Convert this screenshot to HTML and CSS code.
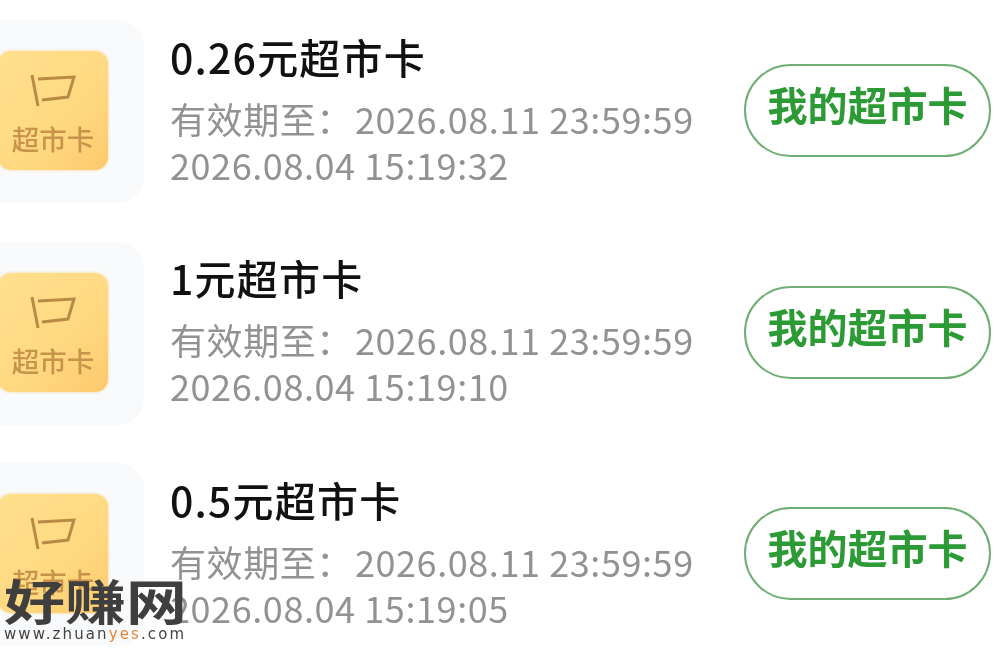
FILE: index.html
```html
<!DOCTYPE html>
<html lang="zh">
<head>
<meta charset="utf-8">
<title>超市卡</title>
<link rel="stylesheet" href="styles.css">
</head>
<body>
<main class="list">
  <section class="row">
    <div class="tile"><div class="card">
      <svg class="glyph" viewBox="0 0 46 36"><path d="M2 2 L8 33 M8 6 L44 4 L38 24 L12 27"/></svg>
      <span class="card-label">超市卡</span>
    </div></div>
    <div class="info">
      <h2 class="title">0.26元超市卡</h2>
      <p class="meta">有效期至：<span class="date">2026.08.11 23:59:59</span></p>
      <p class="meta">2026.08.04 15:19:32</p>
    </div>
    <button class="action">我的超市卡</button>
  </section>
  <section class="row">
    <div class="tile"><div class="card">
      <svg class="glyph" viewBox="0 0 46 36"><path d="M2 2 L8 33 M8 6 L44 4 L38 24 L12 27"/></svg>
      <span class="card-label">超市卡</span>
    </div></div>
    <div class="info">
      <h2 class="title">1元超市卡</h2>
      <p class="meta">有效期至：<span class="date">2026.08.11 23:59:59</span></p>
      <p class="meta">2026.08.04 15:19:10</p>
    </div>
    <button class="action">我的超市卡</button>
  </section>
  <section class="row">
    <div class="tile"><div class="card">
      <svg class="glyph" viewBox="0 0 46 36"><path d="M2 2 L8 33 M8 6 L44 4 L38 24 L12 27"/></svg>
      <span class="card-label">超市卡</span>
    </div></div>
    <div class="info">
      <h2 class="title">0.5元超市卡</h2>
      <p class="meta">有效期至：<span class="date">2026.08.11 23:59:59</span></p>
      <p class="meta">2026.08.04 15:19:05</p>
    </div>
    <button class="action">我的超市卡</button>
  </section>
</main>
<div class="mark">
  <div class="mark-name">好赚网</div>
  <div class="mark-url">www.zhuan<span class="mark-yes">yes</span>.com</div>
</div>
</body>
</html>
```
FILE: styles.css
```css
* { box-sizing: border-box; }
html, body { margin: 0; padding: 0; }
body {
  width: 1000px;
  height: 658px;
  overflow: hidden;
  position: relative;
  background: #fff;
  font-family: "Noto Sans CJK SC", "Noto Sans", sans-serif;
}
.list {
  display: flex;
  flex-direction: column;
  gap: 38px;
  padding-top: 20px;
  filter: blur(0.6px);
}
.row {
  display: flex;
  align-items: flex-start;
  height: 183.5px;
  margin-left: -24px;
}
.tile {
  flex: none;
  width: 168px;
  height: 183px;
  border-radius: 26px;
  background: #f9fafb;
  display: flex;
  align-items: center;
  padding: 0 0 2px 22px;
}
.card {
  width: 110px;
  height: 119px;
  border-radius: 13px;
  background: linear-gradient(135deg, #ffe08e 0%, #ffd981 60%, #fdc96c 100%);
  box-shadow: 0 0 3px #f3d595;
  display: flex;
  flex-direction: column;
  align-items: center;
  padding-top: 22px;
}
.glyph {
  width: 46px;
  height: 36px;
  fill: none;
  stroke: #b98a45;
  stroke-width: 3;
}
.card-label {
  margin-top: 14px;
  font-size: 27.5px;
  line-height: 30px;
  color: #c8934a;
  font-weight: 500;
}
.info {
  flex: none;
  width: 576px;
  margin-left: 26px;
  padding-top: 12.5px;
}
.title {
  margin: 0 0 16px;
  font-size: 41px;
  line-height: 46px;
  font-weight: 500;
  letter-spacing: 1.2px;
  color: #111;
}
.meta {
  margin: 0;
  font-size: 36px;
  line-height: 46px;
  letter-spacing: 0.58px;
  color: #929292;
  white-space: nowrap;
}
.date { margin-left: 2px; }
.action {
  flex: none;
  margin-top: 44px;
  margin-left: -2px;
  width: 247px;
  height: 93px;
  border: 2px solid #6fae74;
  border-radius: 47px;
  background: #fff;
  color: #2c9a35;
  font-family: inherit;
  font-size: 40px;
  font-weight: 700;
  padding: 0 0 13px;
}
.mark {
  position: absolute;
  left: 4px;
  top: 573px;
  width: 190px;
  filter: blur(0.4px);
}
.mark-name {
  font-size: 48px;
  line-height: 52px;
  font-weight: 700;
  color: #3f3f3f;
  transform: scaleX(1.27);
  transform-origin: left center;
  white-space: nowrap;
}
.mark-url {
  margin-top: 1px;
  font-family: "DejaVu Sans", sans-serif;
  font-size: 15px;
  line-height: 16px;
  letter-spacing: 2.1px;
  color: #444;
  white-space: nowrap;
}
.mark-yes { color: #e8873a; }
```
